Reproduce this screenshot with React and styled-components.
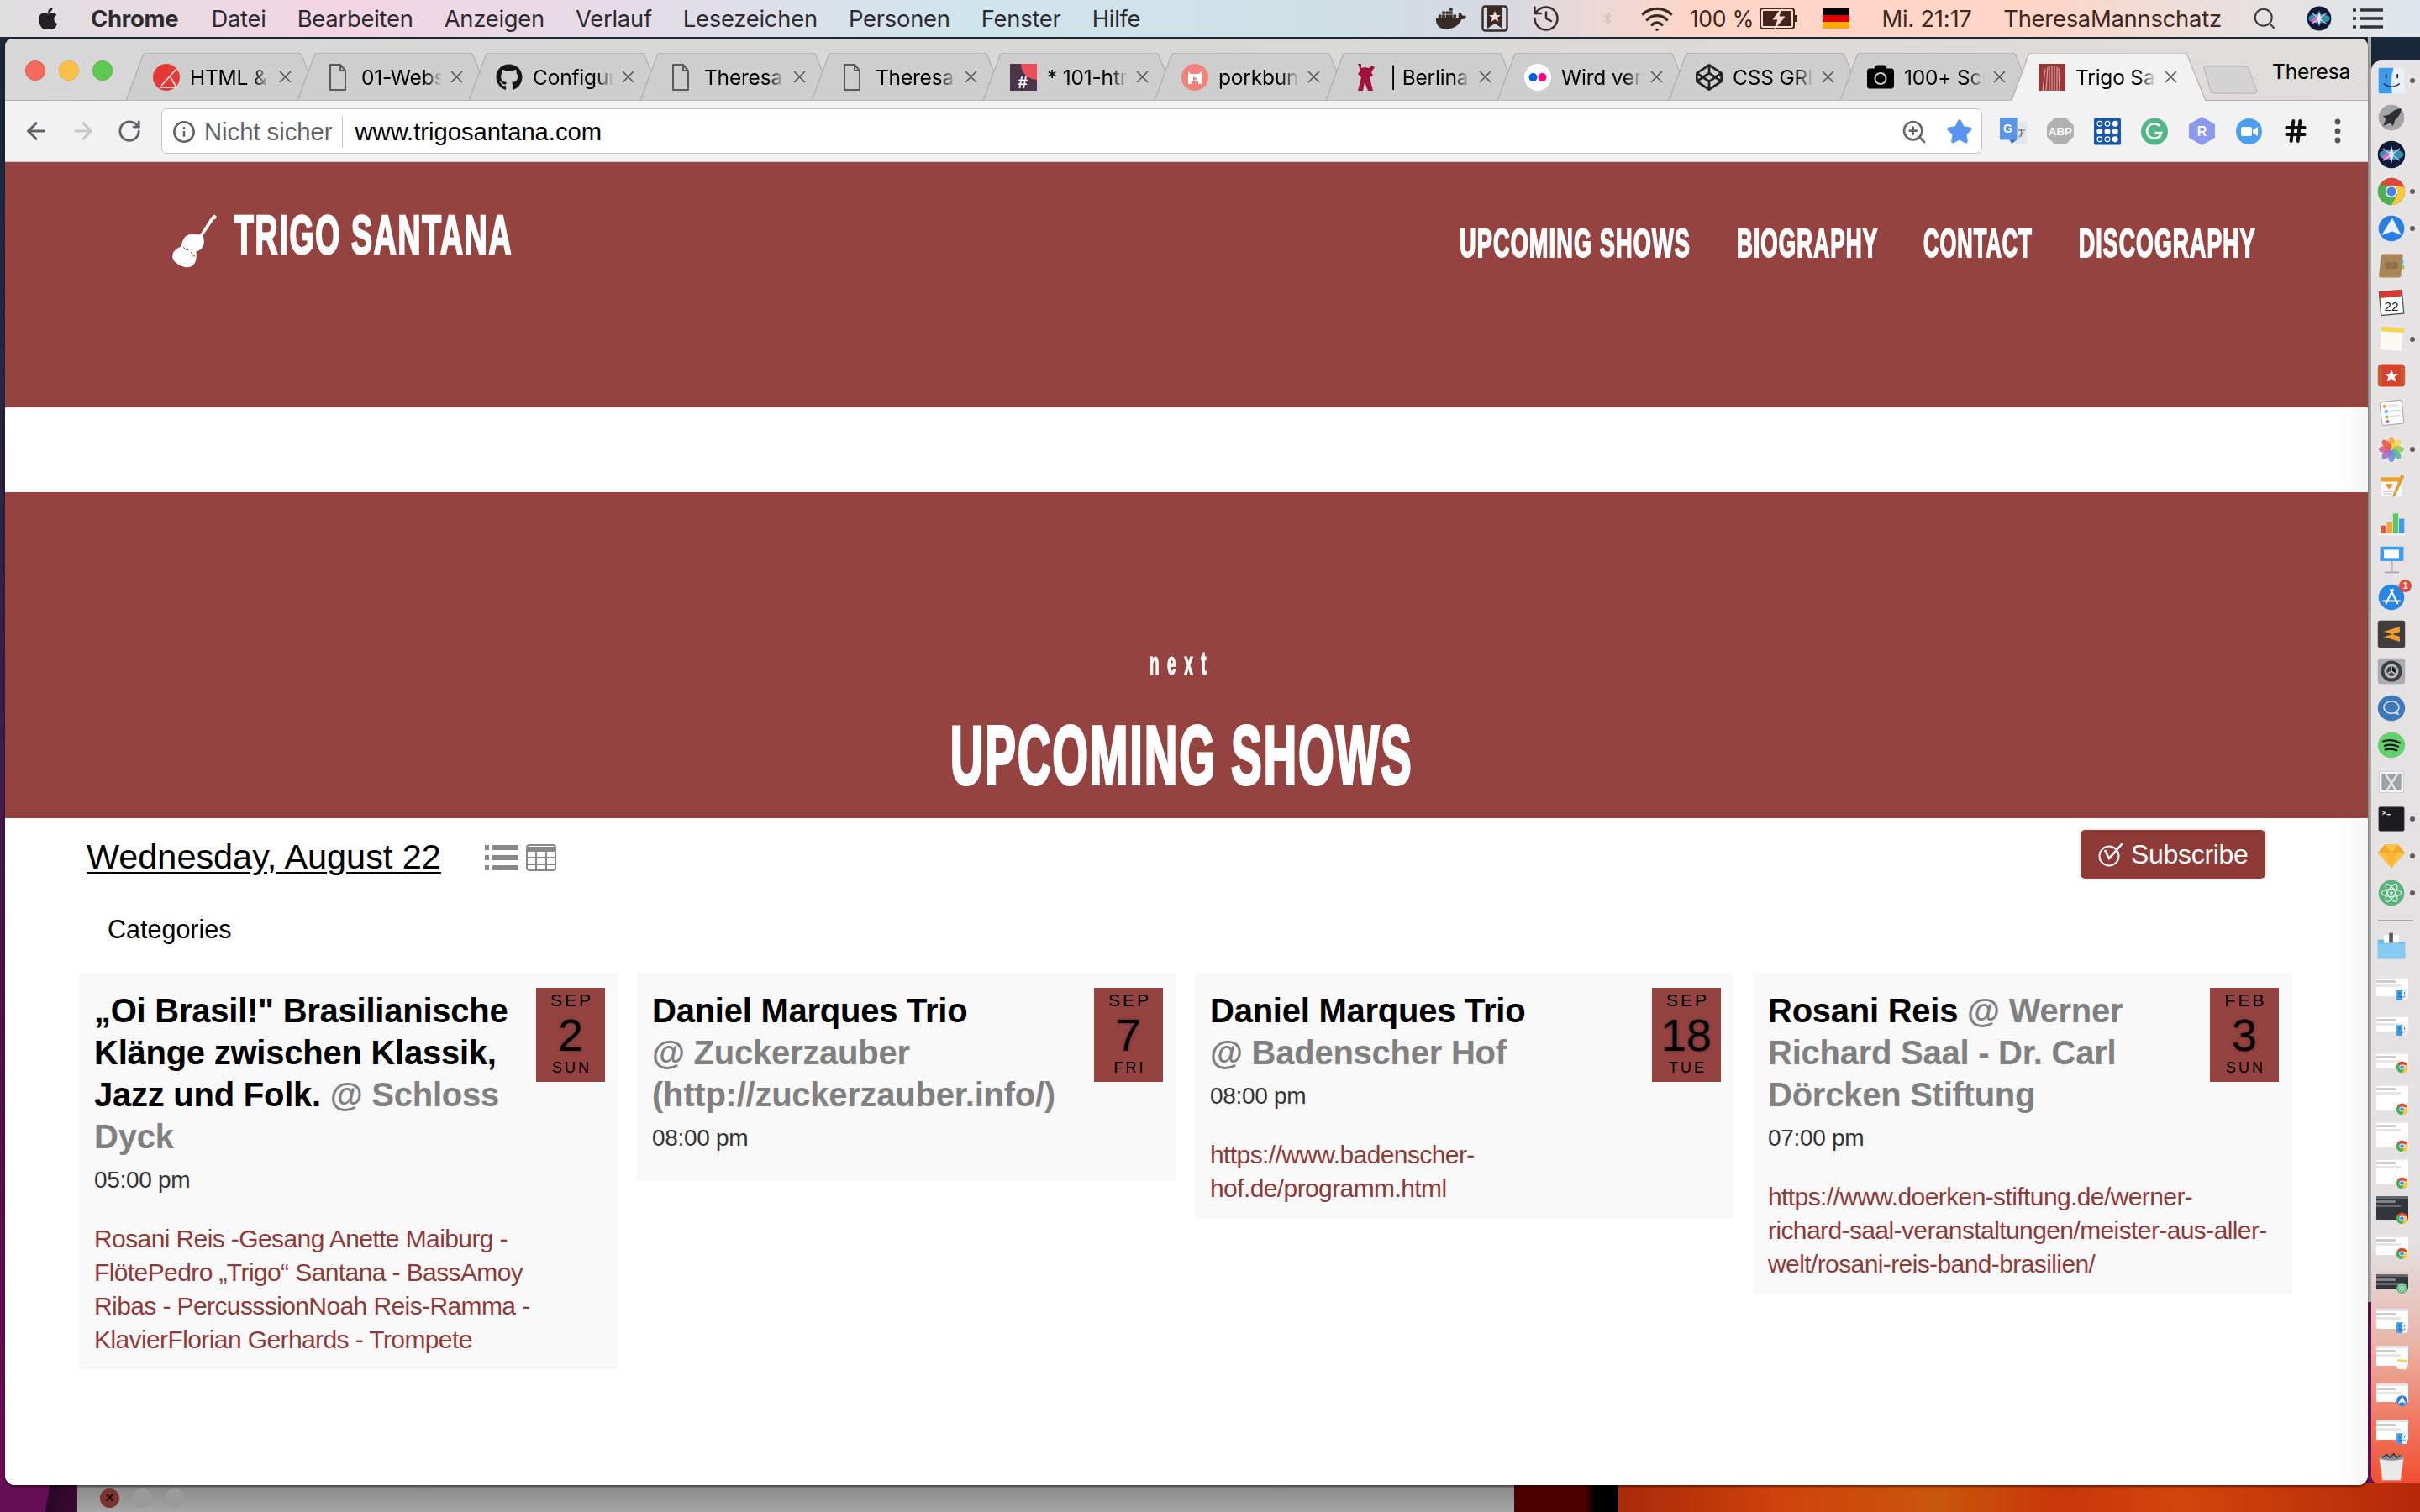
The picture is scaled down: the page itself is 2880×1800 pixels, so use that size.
import React from 'react';
import styled, { createGlobalStyle } from 'styled-components';
import { ArrowLeft, ArrowRight, RotateCw, Info, ZoomIn, Star, Hash, Bluetooth, History, Wifi, Search } from 'lucide-react';
import { FaApple, FaDocker, FaGithub, FaCodepen, FaCamera } from 'react-icons/fa';

const RED = '#954340';
const SANS = '"Liberation Sans", Arial, sans-serif';
const UI = 'Inter, "Liberation Sans", sans-serif';

const Global = createGlobalStyle`
  html, body { margin: 0; padding: 0; width: 2880px; height: 1800px; overflow: hidden; background: #2a1a3a; }
  * { box-sizing: border-box; }
`;

const Screen = styled.div`
  position: relative;
  width: 2880px;
  height: 1800px;
  overflow: hidden;
  background:
    linear-gradient(90deg, transparent 0 2818px, #a9a9a9 2818px 2822px, transparent 2822px) 0 0 / 100% 1550px no-repeat,
    linear-gradient(180deg, #17283a 0, #2b2440 30%, #5b1050 80%, #6a0f55 100%);
`;
const BehindBar = styled.div`
  position: absolute;
  left: 0;
  right: 0;
  bottom: 0;
  height: 34px;
  display: grid;
  grid-template-columns: 92px 1710px 124px 1fr;
`;
const BehindPurple = styled.div`
  background: linear-gradient(100deg, #640f55 0 60%, #2a0626 62%, #3a0a30 100%);
`;
const BehindWin = styled.div`
  background: linear-gradient(180deg, #858585, #a6a6a6);
  display: flex;
  gap: 16px;
  padding: 6px 0 0 27px;
`;
const BehindDot = styled.span`
  width: 23px;
  height: 23px;
  border-radius: 50%;
  background: ${p => p.$c};
  color: #200;
  font: 700 18px/23px ${SANS};
  text-align: center;
`;
const BehindDark = styled.div`
  background: linear-gradient(90deg, #4d0000 0 85px, #000 95px 100%);
`;
const BehindOrange = styled.div`
  background: linear-gradient(90deg, #a82a08 0, #d0420c 20%, #c9560a 40%, #c8360a 55%, #d2450c 70%, #b62808 100%);
`;

const MenuBar = styled.header`
  height: 44px;
  display: flex;
  align-items: center;
  padding: 0 0 0 42px;
  background: linear-gradient(90deg, #dfdfe0 0, #f4d5e4 14%, #e0dfe8 30%, #cfe5ec 40%, #cfdfe6 55%, #d7d9e2 62%, #ffd6c8 70%, #ffd6c8 84%, #e8e0de 92%, #dfe7ec 100%);
  color: #2c2a30;
  font: 400 27.4px/44px ${UI};
  letter-spacing: -0.25px;
  white-space: nowrap;
`;
const MenuLeft = styled.div`
  display: flex;
  align-items: center;
  gap: 37px;
  width: 1660px;
`;
const MenuApp = styled.span`
  font-weight: 700;
  margin-left: 36px;
  margin-right: 2px;
`;
const MenuRight = styled.div`
  display: flex;
  align-items: center;
  color: #42251c;
`;
const MenuSlot = styled.span`
  display: inline-flex;
  align-items: center;
  justify-content: center;
  flex: none;
  width: ${p => p.$w}px;
  margin-left: ${p => p.$m || 0}px;
`;
const Battery = styled.span`
  font-size: 26.5px;
`;
const Flag = styled.span`
  display: block;
  width: 32px;
  height: 24px;
  background: linear-gradient(180deg, #000 0 33%, #d00 33% 66%, #fa0 66% 100%);
`;

const Main = styled.div`
  display: flex;
  align-items: flex-start;
  height: 1756px;
`;

const Window = styled.div`
  position: relative;
  width: 2812px;
  height: 1722px;
  margin: 2px 0 0 6px;
  display: flex;
  flex-direction: column;
  border-radius: 9px 9px 12px 12px;
  overflow: hidden;
  background: #fff;
  box-shadow: 0 2px 3px rgba(0,0,0,.5);
`;
const TabStrip = styled.div`
  height: 74px;
  flex: none;
  position: relative;
  display: flex;
  align-items: flex-end;
  padding-left: 144px;
  background: linear-gradient(90deg, #d7d7d7, #d8d9d7 50%, #e0dcd9);
  border-bottom: 1px solid #b0b0b0;
`;
const Lights = styled.div`
  position: absolute;
  left: 24px;
  top: 26px;
  display: flex;
  gap: 16px;
`;
const Light = styled.span`
  width: 24px;
  height: 24px;
  border-radius: 50%;
  background: ${p => p.$c};
  border: 1px solid rgba(0,0,0,.08);
`;
const TabBox = styled.div`
  position: relative;
  width: 231px;
  height: 57px;
  flex: none;
  margin-right: -27px;
  margin-bottom: -1px;
  display: flex;
  align-items: center;
  padding: 0 0 0 32px;
  z-index: ${p => (p.$active ? 2 : 1)};
`;
const TabShape = styled.svg`
  position: absolute;
  inset: 0;
  width: 231px;
  height: 57px;
`;
const TabFav = styled.span`
  position: relative;
  width: 32px;
  height: 32px;
  flex: none;
  display: flex;
  align-items: center;
  justify-content: center;
`;
const TabTitle = styled.span`
  position: relative;
  width: 96px;
  margin-left: 12px;
  overflow: hidden;
  white-space: nowrap;
  font: 400 24.5px/32px ${UI};
  letter-spacing: -0.2px;
  color: #000;
  -webkit-mask-image: linear-gradient(90deg, #000 78%, transparent 100%);
  mask-image: linear-gradient(90deg, #000 78%, transparent 100%);
`;
const TabClose = styled.svg`
  position: relative;
  width: 15px;
  height: 15px;
  margin-left: 10px;
  flex: none;
`;
const NewTab = styled.svg`
  position: absolute;
  left: 2614px;
  top: 32px;
  width: 70px;
  height: 34px;
`;
const Profile = styled.span`
  position: absolute;
  right: 21px;
  top: 22px;
  font: 400 24.5px/34px ${UI};
  letter-spacing: -0.2px;
  color: #000;
`;

const Toolbar = styled.div`
  height: 73px;
  flex: none;
  display: flex;
  align-items: center;
  padding-left: 21px;
  background: #f2f2f2;
  border-bottom: 1px solid #c8c8c8;
`;
const NavIcons = styled.div`
  width: 165px;
  display: flex;
  align-items: center;
  gap: 24px;
  flex: none;
`;
const Omni = styled.div`
  width: 2167px;
  height: 54px;
  flex: none;
  display: flex;
  align-items: center;
  padding: 1px 10px 0 12px;
  background: #fff;
  border: 1px solid #c4c4c4;
  border-radius: 6px;
  font: 400 29.2px/52px ${SANS};
`;
const Secure = styled.span`
  color: #5f6368;
  margin-left: 10px;
  padding-right: 12px;
  margin-right: 14px;
  border-right: 1px solid #c4c4c4;
  line-height: 38px;
`;
const Url = styled.span`
  color: #000;
  flex: 1;
`;
const Ext = styled.div`
  display: flex;
  align-items: center;
  margin-left: 21px;
  gap: 24px;
`;
const ExtSlot = styled.span`
  width: 32px;
  height: 32px;
  flex: none;
  display: flex;
  align-items: center;
  justify-content: center;
  margin-left: ${p => p.$shift || 0}px;
`;

const Page = styled.main`
  flex: 1;
  display: flex;
  flex-direction: column;
  background: linear-gradient(90deg, #fff calc(100% - 40px), #f7f7f7);
  font-family: ${SANS};
`;
const Hero = styled.section`
  height: 292px;
  flex: none;
  background: ${RED};
  display: flex;
  justify-content: space-between;
  align-items: flex-start;
  padding: 0 135px 0 198px;
`;
const Logo = styled.div`
  display: flex;
  align-items: flex-start;
  padding-top: 32px;
`;
const LogoMark = styled.svg`
  width: 55px;
  height: 67px;
  margin-top: 29px;
  flex: none;
`;
const Squeezed = styled.span`
  display: block;
  width: ${p => p.$w}px;
  white-space: nowrap;
  color: #fff;
  font-family: ${SANS};
  font-weight: 700;
  font-size: ${p => p.$size}px;
  line-height: ${p => p.$lh || p.$size}px;
  letter-spacing: ${p => p.$ls || 0}px;
  -webkit-text-stroke: ${p => p.$stroke || 1}px #fff;
  & > span {
    display: inline-block;
    transform-origin: 0 50%;
    transform: scaleX(${p => p.$sx});
  }
`;
const LogoText = styled(Squeezed)`
  margin: 22px 0 0 20px;
`;
const Nav = styled.nav`
  display: flex;
  gap: 52px;
  padding-top: 73px;
`;
const Spacer = styled.div`
  height: 101px;
  flex: none;
`;
const Banner = styled.section`
  height: 388px;
  flex: none;
  background: ${RED};
  display: flex;
  flex-direction: column;
  align-items: center;
  justify-content: flex-end;
  padding: 0 11px 26px 0;
`;
const Next = styled(Squeezed)`
  margin-bottom: 41px;
`;
const Content = styled.div`
  flex: 1;
  padding: 14px 120px 0 88px;
`;
const DateRow = styled.div`
  display: flex;
  align-items: center;
  height: 58px;
  padding-left: 9px;
`;
const DateTitle = styled.a`
  font: 400 41.4px/58px ${SANS};
  color: #000;
  margin-top: 5px;
  text-decoration: underline;
  text-underline-offset: 4px;
  text-decoration-thickness: 3px;
`;
const ViewIcons = styled.div`
  display: flex;
  gap: 9px;
  margin-left: 52px;
  margin-top: 8px;
`;
const Subscribe = styled.button`
  margin-left: auto;
  width: 224px;
  height: 62px;
  display: flex;
  align-items: center;
  gap: 8px;
  padding: 0 0 0 20px;
  border: 2px solid #f0f0f0;
  border-radius: 7px;
  background: #8e3b38;
  background-clip: padding-box;
  color: #fff;
  font: 400 32px/1 ${SANS};
  letter-spacing: -0.3px;
`;
const Categories = styled.div`
  margin: 40px 0 0 34px;
  font: 400 30.5px/40px ${SANS};
  color: #000;
`;
const Cards = styled.div`
  display: grid;
  grid-template-columns: repeat(4, 642px);
  gap: 22px;
  align-items: start;
  margin-top: 32px;
`;
const Card = styled.article`
  background: #f9f9f9;
  padding: 18px 16px 16px 18px;
`;
const DateBox = styled.div`
  float: right;
  width: 82px;
  height: 112px;
  margin-left: 14px;
  background: ${RED};
  color: #000;
  text-align: center;
  display: flex;
  flex-direction: column;
  align-items: center;
  padding-top: 2px;
`;
const Month = styled.span`
  font: 400 21px/26px ${SANS};
  letter-spacing: 3px;
  margin-right: -3px;
`;
const Day = styled.span`
  font: 400 54px/54px ${SANS};
  margin-top: 1px;
  text-shadow: 0 0 4px rgba(0,0,0,.35);
`;
const Weekday = styled.span`
  font: 400 18px/22px ${SANS};
  letter-spacing: 3px;
  margin-right: -3px;
  margin-top: 1px;
`;
const Title = styled.h3`
  margin: 2px 0 0;
  font: 700 40px/50px ${SANS};
  letter-spacing: -0.25px;
  color: #000;
`;
const Venue = styled.span`
  color: #808080;
`;
const Time = styled.div`
  margin: 7px 0 15px;
  font: 400 28px/40px ${SANS};
  letter-spacing: -0.3px;
  color: #333;
`;
const Body = styled.div`
  margin-top: 30px;
  white-space: pre-line;
  font: 400 30px/40px ${SANS};
  letter-spacing: -0.6px;
  color: #8f3a38;
`;

const Dock = styled.aside`
  width: 58px;
  height: 1696px;
  margin: 28px 0 0 4px;
  padding-top: 2px;
  display: flex;
  flex-direction: column;
  align-items: flex-start;
  border-radius: 12px 0 0 12px;
  background: linear-gradient(180deg, #e6e4e5 0, #e3e1e2 83%, #eab5a8 90%, #f0745a 96%, #f04e30 100%);
`;
const DockRow = styled.div`
  position: relative;
  width: 58px;
  height: 43.95px;
  flex: none;
  display: flex;
  align-items: center;
  padding-left: 6px;
`;
const DockDot = styled.span`
  position: absolute;
  left: 46px;
  top: 19px;
  width: 6px;
  height: 6px;
  border-radius: 50%;
  background: #5c5c5c;
`;
const DockBadge = styled.span`
  position: absolute;
  left: 33px;
  top: 1px;
  width: 15px;
  height: 15px;
  border-radius: 50%;
  background: #e64a3c;
  color: #fff;
  font: 700 10px/15px ${SANS};
  text-align: center;
`;
const DockSep = styled.div`
  width: 42px;
  height: 2px;
  margin: 10px 0 7px 8px;
  background: #a8a8a8;
  flex: none;
`;
const DockGap = styled.div`
  height: 5px;
  flex: none;
`;
const Thumb = styled.span`
  position: relative;
  display: block;
  width: 38px;
  height: ${p => p.$h}px;
  background: ${p => p.$dark ? '#33353c' : '#fff'};
`;
const ThumbBar = styled.span`
  display: block;
  height: 3px;
  width: ${p => p.$w}%;
  background: ${p => p.$c};
  opacity: .75;
  margin-bottom: 2px;
`;
const ThumbBadge = styled.svg`
  position: absolute;
  right: 0;
  bottom: -6px;
  width: 15px;
  height: 15px;
`;

const ChromeGlyph = () => (
  <>
    <circle cx="20" cy="20" r="18" fill="#4caf50" />
    <path d="M20 2A18 18 0 0 1 37 26L27 20A8 8 0 0 0 20 12H5A18 18 0 0 1 20 2Z" fill="#e0463a" />
    <path d="M37 14A18 18 0 0 1 20 38L28 24L20 12Z" fill="#f8c93e" />
    <circle cx="20" cy="20" r="8" fill="#fff" />
    <circle cx="20" cy="20" r="6.3" fill="#4b82e8" />
  </>
);
const FinderGlyph = () => (
  <>
    <rect x="3" y="3" width="34" height="34" rx="2" fill="#e8f1fa" />
    <path d="M5 3H23Q18 18 21 37H5a2 2 0 0 1-2-2V5a2 2 0 0 1 2-2Z" fill="#3d9bec" />
    <path d="M10 24Q20 32 31 24" stroke="#222" fill="none" strokeWidth="1.4" />
    <path d="M13 11v6M28 11v6" stroke="#222" strokeWidth="1.8" />
  </>
);
const SparkGlyph = () => (
  <>
    <circle cx="20" cy="20" r="17" fill="#2c7fe0" />
    <path d="M21 6L33 29L21 24L7 29Z" fill="#e8f2fc" />
  </>
);
const AtomGlyph = () => (
  <>
    <circle cx="20" cy="20" r="17" fill="#5bb27d" />
    <g fill="none" stroke="#f2fff6" strokeWidth="1.1">
      <ellipse cx="20" cy="20" rx="13" ry="5" />
      <ellipse cx="20" cy="20" rx="13" ry="5" transform="rotate(60 20 20)" />
      <ellipse cx="20" cy="20" rx="13" ry="5" transform="rotate(120 20 20)" />
    </g>
    <circle cx="20" cy="20" r="2" fill="#fff" />
  </>
);
const NotesGlyph = () => (
  <>
    <rect x="5" y="6" width="30" height="29" fill="#fafaf2" stroke="#ccc" strokeWidth=".5" transform="rotate(4 20 20)" />
    <rect x="6" y="4" width="30" height="6" fill="#f6d44c" transform="rotate(4 20 20)" />
  </>
);

const SIRI = (
  <>
    <circle cx="20" cy="20" r="18" fill="#101a36" />
    <ellipse cx="20" cy="20" rx="16" ry="7" fill="#3aa5c4" opacity=".85" />
    <ellipse cx="16" cy="21" rx="9" ry="4" fill="#d868c0" opacity=".9" transform="rotate(-25 16 21)" />
    <path d="M20 8L23 20L20 32L17 20Z" fill="#e8f0ff" opacity=".9" />
    <path d="M9 12L20 20L31 28M31 12L20 20L9 28" stroke="#e8f0ff" strokeWidth="1.6" opacity=".7" />
  </>
);

const dockGlyphs = {
  finder: <FinderGlyph />,
  rocket: (
    <>
      <circle cx="20" cy="20" r="17" fill="#a2a4a6" />
      <path d="M33 8Q24 8 17 16L9 18L13 22L9 31L18 27L22 31L25 23Q33 16 33 8Z" fill="#2f2f33" />
    </>
  ),
  siri: SIRI,
  chrome: <ChromeGlyph />,
  spark: <SparkGlyph />,
  contacts: (
    <>
      <rect x="4" y="5" width="29" height="31" rx="2" fill="#a98656" transform="skewX(-6) translate(3 0)" />
      <rect x="33" y="12" width="3" height="6" fill="#66b6d8" />
      <rect x="34" y="19" width="3" height="6" fill="#a4c64a" />
      <circle cx="16" cy="20" r="5" fill="#8f7048" />
      <circle cx="24" cy="20" r="5" fill="#8f7048" />
    </>
  ),
  calendar: (
    <>
      <rect x="5" y="5" width="30" height="31" fill="#fff" stroke="#555" strokeWidth="1.5" transform="rotate(-5 20 20)" />
      <rect x="5" y="5" width="30" height="8" fill="#d63a30" transform="rotate(-5 20 20)" />
      <text x="20" y="31" fontSize="17" fontFamily={SANS} textAnchor="middle" fill="#222">22</text>
    </>
  ),
  notes: <NotesGlyph />,
  wunder: (
    <>
      <rect x="2" y="5" width="36" height="30" rx="5" fill="#c95b34" />
      <rect x="8" y="6" width="24" height="28" fill="#d8402e" />
      <path d="M20 12L22.4 18H29L24 22L26 28L20 24.4L14 28L16 22L11 18H17.6Z" fill="#fff" />
    </>
  ),
  reminders: (
    <>
      <rect x="6" y="5" width="29" height="31" rx="2" fill="#fbfbfb" stroke="#888" strokeWidth=".8" transform="rotate(-6 20 20)" />
      <circle cx="11" cy="12" r="2.2" fill="#f29a30" />
      <circle cx="13" cy="19" r="2.2" fill="#4aa8e8" />
      <circle cx="14" cy="26" r="2.2" fill="#7ac943" />
      <circle cx="15" cy="32" r="2.2" fill="#c86fd8" />
      <path d="M16 11l14-1M18 18l14-1M18 25l14-1" stroke="#ccc" strokeWidth="1" />
    </>
  ),
  photos: (
    <>
      <circle cx="20" cy="20" r="18" fill="#e9e9e9" />
      {['#f2a33a', '#f3d34a', '#93c950', '#4fb892', '#6a8ad8', '#9a6bc8', '#d25a8a', '#e8543e'].map((c, i) => (
        <ellipse key={c} cx="20" cy="11" rx="4.5" ry="8" fill={c} opacity=".85" transform={`rotate(${i * 45} 20 20)`} />
      ))}
    </>
  ),
  pages: (
    <>
      <rect x="6" y="7" width="28" height="27" fill="#fbfbfb" stroke="#ddd" strokeWidth=".6" />
      <rect x="6" y="8" width="28" height="6" fill="#f0a030" />
      <path d="M12 17H22L17 24Z" fill="#f08a20" />
      <path d="M9 27h14M9 30h12" stroke="#bbb" strokeWidth="1" />
      <path d="M33 4L37 7L25 33L21 34Z" fill="#d9a03a" />
    </>
  ),
  numbers: (
    <>
      <rect x="2" y="33" width="36" height="3" fill="#f4f4f4" />
      <rect x="6" y="23" width="7" height="10" fill="#e2574c" />
      <rect x="14" y="18" width="7" height="15" fill="#f4a33a" />
      <rect x="22" y="7" width="7" height="26" fill="#5ac85a" />
      <rect x="30" y="14" width="7" height="19" fill="#3d9bec" />
    </>
  ),
  keynote: (
    <>
      <rect x="5" y="2" width="31" height="19" fill="#3d9bec" />
      <rect x="10" y="6" width="20" height="11" fill="#fdfdfd" />
      <rect x="19" y="21" width="3" height="14" fill="#b8bcc0" />
      <rect x="11" y="35" width="19" height="2" fill="#a4a8ac" />
    </>
  ),
  appstore: (
    <>
      <circle cx="20" cy="20" r="17" fill="#2a86e4" />
      <path d="M19 10L28 28M22 10L13 28M9 25H31" stroke="#fff" strokeWidth="2.4" fill="none" strokeLinecap="round" />
    </>
  ),
  sublime: (
    <>
      <rect x="2" y="2" width="36" height="36" rx="3" fill="#3e3e3e" />
      <path d="M9 17L31 10V17L9 24ZM9 23L31 30V23L9 16Z" fill="#f39a2c" />
    </>
  ),
  prefs: (
    <>
      <rect x="2" y="3" width="36" height="34" rx="4" fill="#a9adb2" />
      <circle cx="20" cy="20" r="14" fill="#3f4044" />
      <circle cx="20" cy="20" r="8" fill="none" stroke="#bcbcbc" strokeWidth="3" />
      <path d="M20 12V20L27 25M20 20L13 25" stroke="#bcbcbc" strokeWidth="2" />
    </>
  ),
  chat: (
    <>
      <ellipse cx="20" cy="20" rx="18" ry="17" fill="#3f78b8" />
      <ellipse cx="20" cy="19" rx="10" ry="8" fill="none" stroke="#e8f2ff" strokeWidth="1.6" />
      <path d="M24 26L29 28L27 24" stroke="#e8f2ff" fill="none" strokeWidth="1.4" />
    </>
  ),
  spotify: (
    <>
      <ellipse cx="20" cy="20" rx="18" ry="17" fill="#63d26e" />
      <path d="M9 15Q20 11 31 17M11 21Q20 18 29 22M12 26Q20 24 27 27" stroke="#161616" fill="none" strokeWidth="2.5" strokeLinecap="round" />
    </>
  ),
  preview: (
    <>
      <rect x="4" y="6" width="32" height="28" fill="#f8f8f8" stroke="#ccc" />
      <rect x="7" y="9" width="26" height="22" fill="#9ba3a8" />
      <path d="M10 6L28 34M30 6L12 34" stroke="#e8e8e8" strokeWidth="2.5" />
    </>
  ),
  terminal: (
    <>
      <rect x="3" y="4" width="34" height="32" rx="2" fill="#1c1c1e" stroke="#777" strokeWidth=".6" />
      <path d="M8 10l4 2l-4 2M14 14h5" stroke="#eee" strokeWidth="1.2" fill="none" />
    </>
  ),
  sketch: (
    <>
      <path d="M11 5H29L38 16L20 36L2 16Z" fill="#f5a623" />
      <path d="M2 16H38L20 36ZM11 5L20 16L29 5Z" fill="#fcc24a" />
      <path d="M12 16H28L20 36Z" fill="#f9b533" />
    </>
  ),
  atom: <AtomGlyph />,
  folder: (
    <>
      <path d="M2 12H14L17 15H38V37H2Z" fill="#6bb9ea" />
      <rect x="10" y="6" width="20" height="10" fill="#fff" />
      <rect x="17" y="3" width="5" height="13" fill="#555" />
      <path d="M2 17H38V37H2Z" fill="#86cbf2" />
    </>
  ),
  trash: (
    <>
      <path d="M4 8H36L32 38H8Z" fill="#e9e9ea" stroke="#bbb" strokeWidth=".6" />
      <ellipse cx="20" cy="8" rx="16" ry="4" fill="#8c8e90" />
      <path d="M8 8l6-4l4 4l5-5l4 5l5-3" stroke="#333" fill="none" strokeWidth="1.6" />
    </>
  ),
};

const DockIcon = ({ name }) => (
  <svg width="36" height="36" viewBox="0 0 40 40">{dockGlyphs[name]}</svg>
);

const dockApps = [
  ['finder', 1], ['rocket'], ['siri'], ['chrome', 1], ['spark', 1], ['contacts'], ['calendar'], ['notes', 1],
  ['wunder'], ['reminders'], ['photos', 1], ['pages'], ['numbers'], ['keynote'], ['appstore', 0, 1], ['sublime'],
  ['prefs'], ['chat'], ['spotify'], ['preview'], ['terminal', 1], ['sketch', 1], ['atom', 1],
];

const thumbs = [
  [24, 0, 'finder'], [20, 0, 'finder'], [20, 0, 'chrome'], [32, 0, 'chrome'], [32, 0, 'chrome'], [32, 0, 'chrome'],
  [28, 1, 'chrome'], [24, 0, 'chrome'], [18, 1, 'atom'], [24, 0, 'finder'], [24, 0, 'notes'], [22, 0, 'spark'], [24, 0, 'finder'],
];
const badgeGlyphs = { finder: <FinderGlyph />, chrome: <ChromeGlyph />, atom: <AtomGlyph />, notes: <NotesGlyph />, spark: <SparkGlyph /> };

const PageDoc = () => (
  <svg width="20" height="32" viewBox="0 0 20 32">
    <path d="M1 1H13L19 8V31H1Z M13 1V8H19" fill="none" stroke="#5a5a5a" strokeWidth="2" strokeLinejoin="round" />
  </svg>
);

const favicons = {
  html: (
    <svg width="32" height="32" viewBox="0 0 32 32">
      <circle cx="16" cy="16" r="16" fill="#e53935" />
      <path d="M28 6L10 26M21 16L28 28H8" stroke="#fff" strokeWidth="1.6" fill="none" opacity=".9" />
    </svg>
  ),
  doc: <PageDoc />,
  github: <FaGithub size={32} color="#161616" />,
  slack: (
    <svg width="32" height="32" viewBox="0 0 32 32">
      <rect width="32" height="32" fill="#4a354a" />
      <path d="M13 0H32V19A19 19 0 0 1 13 0Z" fill="#ec4f5c" />
      <text x="15" y="29" fontSize="21" fontWeight="700" fontFamily={SANS} textAnchor="middle" fill="#fff">#</text>
    </svg>
  ),
  pork: (
    <svg width="32" height="32" viewBox="0 0 32 32">
      <circle cx="16" cy="16" r="16" fill="#f0837c" />
      <path d="M8 9L11 12H21L24 9V24H20V21H12V24H8Z" fill="#fff" />
      <path d="M14 15L19 18L14 20Z" fill="#f0837c" />
    </svg>
  ),
  bear: (
    <svg width="32" height="32" viewBox="0 0 32 32">
      <path d="M6 0H10V5L14 4L20 5L22 2L26 4L22 10L24 14L20 16L24 32H18L14 22L12 32H6L10 16L6 12L9 8Z" fill="#a3123a" />
    </svg>
  ),
  flickr: (
    <svg width="32" height="32" viewBox="0 0 32 32">
      <circle cx="16" cy="16" r="16" fill="#fff" />
      <circle cx="10.5" cy="16" r="5" fill="#0063dc" />
      <circle cx="21.5" cy="16" r="5" fill="#ff0084" />
    </svg>
  ),
  codepen: <FaCodepen size={34} color="#222" />,
  camera: <FaCamera size={33} color="#000" />,
  trigo: (
    <svg width="32" height="32" viewBox="0 0 32 32">
      <rect width="32" height="32" fill="#9c3737" />
      <path d="M5 32L8 6M9 32L11 4M13 32V2M16 32V2M19 32V2M22 32V3M25 32L24 5" stroke="#f0d8d8" strokeWidth=".8" />
    </svg>
  ),
};

const tabs = [
  ['html', 'HTML & CSS'], ['doc', '01-Website'], ['github', 'Configure'], ['doc', 'Theresa M'], ['doc', 'Theresa M'],
  ['slack', '* 101-html'], ['pork', 'porkbun.c'], ['bear', '| Berlinale'], ['flickr', 'Wird verar'], ['codepen', 'CSS GRID'],
  ['camera', '100+ Scre'], ['trigo', 'Trigo Santana'],
];

const Tab = ({ icon, title, active }) => (
  <TabBox $active={active}>
    <TabShape viewBox="0 0 231 57">
      <path
        d="M0 57L20 3Q21 0 24 0H205Q208 0 209 3L231 57Z"
        fill={active ? '#f2f2f2' : '#cecece'}
        stroke="#a6a6a6"
        strokeWidth="1"
      />
      {active && <rect x="1" y="56" width="229" height="2" fill="#f2f2f2" />}
    </TabShape>
    <TabFav>{favicons[icon]}</TabFav>
    <TabTitle>{title}</TabTitle>
    <TabClose viewBox="0 0 15 15">
      <path d="M1 1L14 14M14 1L1 14" stroke="#555" strokeWidth="1.6" />
    </TabClose>
  </TabBox>
);

const extensions = [
  <svg key="t" width="34" height="34" viewBox="0 0 34 34">
    <rect x="0" y="0" width="22" height="28" fill="#5a95ea" />
    <path d="M22 5H34V33H18L22 28Z" fill="#e4e6ea" />
    <path d="M12 28H22L15 33Z" fill="#3d6fc0" />
    <text x="10" y="19" fontSize="15" fontWeight="700" fontFamily={SANS} textAnchor="middle" fill="#fff">G</text>
    <path d="M23 16H32M27 14V24M24 25L30 18" stroke="#777" strokeWidth="1.3" />
  </svg>,
  <svg key="a" width="34" height="34" viewBox="0 0 34 34">
    <path d="M10 0H24L34 10V24L24 34H10L0 24V10Z" fill="#b1b1b1" />
    <text x="17" y="22" fontSize="14" fontWeight="700" fontFamily={SANS} textAnchor="middle" fill="#fff">ABP</text>
  </svg>,
  <svg key="g" width="33" height="33" viewBox="0 0 33 33">
    <rect width="33" height="33" rx="2" fill="#1a57a8" />
    {[7, 16.5, 26].flatMap(y => [7, 16.5, 26].map(x => (
      <circle key={`${x}-${y}`} cx={x} cy={y} r="3" fill={x === 26 || y === 16.5 ? '#fff' : 'none'} stroke="#fff" strokeWidth="1.2" />
    )))}
  </svg>,
  <svg key="gr" width="33" height="33" viewBox="0 0 33 33">
    <circle cx="16.5" cy="16.5" r="16.5" fill="#52b788" />
    <path d="M23 10A9 9 0 1 0 25 18H17M23 24V18" stroke="#fff" strokeWidth="2.6" fill="none" />
  </svg>,
  <svg key="r" width="31" height="34" viewBox="0 0 31 34">
    <path d="M15.5 0L31 9V25L15.5 34L0 25V9Z" fill="#8c9aec" />
    <text x="15.5" y="23" fontSize="16" fontWeight="700" fontFamily={SANS} textAnchor="middle" fill="#fff">R</text>
  </svg>,
  <svg key="z" width="31" height="31" viewBox="0 0 31 31">
    <circle cx="15.5" cy="15.5" r="15.5" fill="#4b9df0" />
    <rect x="6" y="10" width="13" height="11" rx="2" fill="#fff" />
    <path d="M20 14L26 10V21L20 17Z" fill="#fff" />
  </svg>,
];

const shows = [
  {
    m: 'SEP', d: '2', w: 'SUN', t: '„Oi Brasil!" Brasilianische Klänge zwischen Klassik, Jazz und Folk.', v: '@\u00a0Schloss Dyck', time: '05:00 pm',
    body: 'Rosani Reis -Gesang Anette Maiburg -\nFlötePedro „Trigo“ Santana - BassAmoy\nRibas - PercusssionNoah Reis-Ramma -\nKlavierFlorian Gerhards - Trompete',
  },
  { m: 'SEP', d: '7', w: 'FRI', t: 'Daniel Marques Trio', v: '@\u00a0Zuckerzauber (http://zuckerzauber.info/)', time: '08:00 pm' },
  { m: 'SEP', d: '18', w: 'TUE', t: 'Daniel Marques Trio', v: '@\u00a0Badenscher Hof', time: '08:00 pm', body: 'https://www.badenscher-\nhof.de/programm.html' },
  {
    m: 'FEB', d: '3', w: 'SUN', t: 'Rosani Reis', v: '@\u00a0Werner Richard Saal - Dr. Carl Dörcken Stiftung', time: '07:00 pm',
    body: 'https://www.doerken-stiftung.de/werner-\nrichard-saal-veranstaltungen/meister-aus-aller-\nwelt/rosani-reis-band-brasilien/',
  },
];

const navItems = [
  ['UPCOMING SHOWS', 278, 0.565], ['BIOGRAPHY', 170, 0.545], ['CONTACT', 133, 0.53], ['DISCOGRAPHY', 209, 0.555],
];

export default function App() {
  return (
    <Screen>
      <Global />
      <BehindBar>
        <BehindPurple />
        <BehindWin>
          <BehindDot $c="#7a3430">×</BehindDot>
          <BehindDot $c="#9a9a9a" />
          <BehindDot $c="#9a9a9a" />
        </BehindWin>
        <BehindDark />
        <BehindOrange />
      </BehindBar>

      <MenuBar>
        <MenuLeft>
          <FaApple size={30} color="#222" style={{ marginRight: -37 }} />
          <MenuApp>Chrome</MenuApp>
          <span>Datei</span>
          <span>Bearbeiten</span>
          <span>Anzeigen</span>
          <span>Verlauf</span>
          <span>Lesezeichen</span>
          <span>Personen</span>
          <span>Fenster</span>
          <span>Hilfe</span>
        </MenuLeft>
        <MenuRight>
          <MenuSlot $w={36} $m={7}><FaDocker size={36} color="#3a2a26" /></MenuSlot>
          <MenuSlot $w={32} $m={18}>
            <svg width="32" height="32" viewBox="0 0 32 32">
              <rect x="1.5" y="1.5" width="29" height="29" rx="3" fill="none" stroke="#3a2a26" strokeWidth="2.4" />
              <path d="M7 2H25V28L16 22L7 28Z" fill="#3a2a26" />
              <path d="M16 7L18 12H23L19 15L20.5 20L16 17L11.5 20L13 15L9 12H14Z" fill="#f4dcd4" />
            </svg>
          </MenuSlot>
          <MenuSlot $w={36} $m={27}><History size={36} color="#3a2a26" strokeWidth={1.6} /></MenuSlot>
          <MenuSlot $w={16} $m={47}><Bluetooth size={30} color="#bfaea8" strokeWidth={1.5} /></MenuSlot>
          <MenuSlot $w={42} $m={30}><Wifi size={40} color="#3a2a26" strokeWidth={2} /></MenuSlot>
          <MenuSlot $w={72} $m={20}><Battery>100 %</Battery></MenuSlot>
          <MenuSlot $w={48} $m={8}>
            <svg width="46" height="26" viewBox="0 0 46 26">
              <rect x="1" y="1" width="40" height="24" rx="3" fill="none" stroke="#42251c" strokeWidth="2" />
              <rect x="4" y="4" width="34" height="18" fill="#42251c" />
              <path d="M26 1L16 14H22L18 25L30 11H23Z" fill="#fbd8cc" stroke="#fbd8cc" />
              <rect x="42" y="9" width="3" height="8" fill="#42251c" />
            </svg>
          </MenuSlot>
          <MenuSlot $w={32} $m={28}><Flag /></MenuSlot>
          <MenuSlot $w={112} $m={36}>Mi. 21:17</MenuSlot>
          <MenuSlot $w={270} $m={30}>TheresaMannschatz</MenuSlot>
          <MenuSlot $w={30} $m={31}><Search size={32} color="#3a3a3a" strokeWidth={1.6} /></MenuSlot>
          <MenuSlot $w={32} $m={34}>
            <svg width="32" height="32" viewBox="0 0 40 40">{SIRI}</svg>
          </MenuSlot>
          <MenuSlot $w={36} $m={24}>
            <svg width="36" height="26" viewBox="0 0 36 26">
              <path d="M0 3h4M9 3h27M0 13h4M9 13h27M0 23h4M9 23h27" stroke="#30343a" strokeWidth="3.6" />
            </svg>
          </MenuSlot>
        </MenuRight>
      </MenuBar>

      <Main>
        <Window>
          <TabStrip>
            <Lights>
              <Light $c="#f46b5d" />
              <Light $c="#f9c14a" />
              <Light $c="#5fc84f" />
            </Lights>
            {tabs.map(([icon, title], i) => (
              <Tab key={i} icon={icon} title={title} active={i === tabs.length - 1} />
            ))}
            <NewTab viewBox="0 0 70 34">
              <path d="M3 3Q3 1 5 1H52Q55 1 56 4L66 30Q66 33 63 33H15Q12 33 11 31Z" fill="#d3d3d3" stroke="#b0b0b0" />
            </NewTab>
            <Profile>Theresa</Profile>
          </TabStrip>
          <Toolbar>
            <NavIcons>
              <ArrowLeft size={32} color="#5f6368" strokeWidth={2.2} />
              <ArrowRight size={32} color="#c8c8c8" strokeWidth={2.2} />
              <RotateCw size={30} color="#5f6368" strokeWidth={2.2} />
            </NavIcons>
            <Omni>
              <Info size={28} color="#5f6368" strokeWidth={2.2} />
              <Secure>Nicht sicher</Secure>
              <Url>www.trigosantana.com</Url>
              <ZoomIn size={32} color="#666" strokeWidth={2} style={{ marginRight: 22 }} />
              <Star size={32} color="#5a95f0" fill="#5a95f0" />
            </Omni>
            <Ext>
              {extensions.map(e => <ExtSlot key={e.key}>{e}</ExtSlot>)}
              <ExtSlot><Hash size={36} color="#111" strokeWidth={3} /></ExtSlot>
              <ExtSlot $shift={-6}>
                <svg width="10" height="30" viewBox="0 0 10 30">
                  <circle cx="5" cy="4" r="3.4" fill="#555" />
                  <circle cx="5" cy="15" r="3.4" fill="#555" />
                  <circle cx="5" cy="26" r="3.4" fill="#555" />
                </svg>
              </ExtSlot>
            </Ext>
          </Toolbar>

          <Page>
            <Hero>
              <Logo>
                <LogoMark viewBox="130 108 165 200">
                  <path
                    d="M283 112L291 118L288 128L281 130L242 188Q250 205 244 222Q238 238 218 244Q222 262 215 282Q205 302 180 300Q155 296 140 278Q128 262 138 245Q148 232 165 225Q168 205 180 190Q195 178 215 183L233 183L272 122Z"
                    fill="#fff"
                  />
                  <path d="M172 228Q180 240 192 238M200 245Q205 260 215 262" stroke={RED} strokeWidth="3" fill="none" />
                </LogoMark>
                <LogoText $w={330} $size={65} $sx={0.575} $ls={3} $stroke={2.6}><span>TRIGO SANTANA</span></LogoText>
              </Logo>
              <Nav>
                {navItems.map(([label, w, sx]) => (
                  <Squeezed key={label} $w={w} $size={48} $sx={sx} $ls={2} $stroke={2}>
                    <span>{label}</span>
                  </Squeezed>
                ))}
              </Nav>
            </Hero>
            <Spacer />
            <Banner>
              <Next $w={78} $size={38} $sx={0.5} $ls={19} $stroke={1.2}><span>next</span></Next>
              <Squeezed $w={551} $size={98} $sx={0.555} $ls={4} $stroke={4}><span>UPCOMING SHOWS</span></Squeezed>
            </Banner>
            <Content>
              <DateRow>
                <DateTitle>Wednesday, August 22</DateTitle>
                <ViewIcons>
                  <svg width="40" height="32" viewBox="0 0 40 32">
                    <path d="M0 4h5M9 4h31M0 16h5M9 16h31M0 28h5M9 28h31" stroke="#888" strokeWidth="6" />
                  </svg>
                  <svg width="36" height="32" viewBox="0 0 36 32">
                    <rect x="1" y="1" width="34" height="30" rx="3" fill="#fff" stroke="#888" strokeWidth="2" />
                    <path d="M1 3h34v6H1z" fill="#888" />
                    <path d="M1 16h34M1 24h34M12 9v22M24 9v22" stroke="#888" strokeWidth="2" />
                  </svg>
                </ViewIcons>
                <Subscribe>
                  <svg width="32" height="30" viewBox="0 0 32 30">
                    <circle cx="14" cy="17" r="11.5" fill="none" stroke="#fff" strokeWidth="2" />
                    <path d="M9 10L14 20L30 2" fill="none" stroke="#fff" strokeWidth="2.6" />
                  </svg>
                  Subscribe
                </Subscribe>
              </DateRow>
              <Categories>Categories</Categories>
              <Cards>
                {shows.map(s => (
                  <Card key={s.d}>
                    <DateBox>
                      <Month>{s.m}</Month>
                      <Day>{s.d}</Day>
                      <Weekday>{s.w}</Weekday>
                    </DateBox>
                    <Title>{s.t} <Venue>{s.v}</Venue></Title>
                    <Time>{s.time}</Time>
                    {s.body && <Body>{s.body}</Body>}
                  </Card>
                ))}
              </Cards>
            </Content>
          </Page>
        </Window>
        <Dock>
          {dockApps.map(([name, dot, badge]) => (
            <DockRow key={name}>
              <DockIcon name={name} />
              {dot ? <DockDot /> : null}
              {badge ? <DockBadge>1</DockBadge> : null}
            </DockRow>
          ))}
          <DockSep />
          <DockRow><DockIcon name="folder" /></DockRow>
          <DockGap />
          {thumbs.map(([h, dark, badge], i) => (
            <DockRow key={i}>
              <Thumb $h={h} $dark={dark}>
                <ThumbBar $w={100} $c={dark ? '#777' : '#ddd'} />
                <ThumbBar $w={60} $c={dark ? '#999' : '#bbb'} />
                <ThumbBar $w={75} $c={dark ? '#777' : '#ddd'} />
                <ThumbBadge viewBox="0 0 40 40">{badgeGlyphs[badge]}</ThumbBadge>
              </Thumb>
            </DockRow>
          ))}
          <DockRow><DockIcon name="trash" /></DockRow>
        </Dock>
      </Main>
    </Screen>
  );
}
